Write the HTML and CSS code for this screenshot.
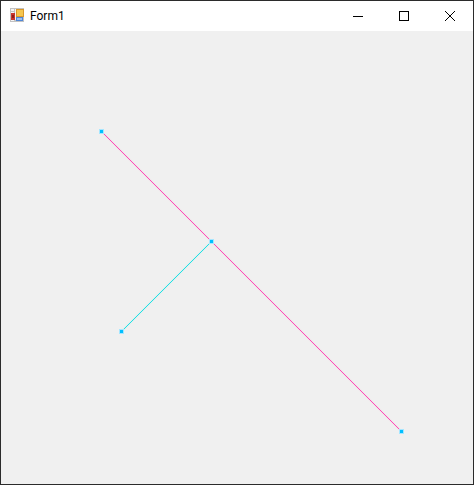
FILE: index.html
```html
<!DOCTYPE html>
<html lang="en">
<head>
<meta charset="utf-8">
<title>Form1</title>
<link rel="stylesheet" href="styles.css">
</head>
<body>
<div class="window">
  <header class="titlebar">
    <svg class="app-icon" width="14" height="14" viewBox="0 0 14 14" shape-rendering="crispEdges">
      <rect x="0" y="0" width="14" height="14" fill="#c2c2c2"/>
      <rect x="1" y="1" width="12" height="12" fill="#f4f4f4"/>
      <path d="M0 3.5h5M0 11.5h5M4.5 0v14M5 12.5h9" stroke="#c2c2c2" fill="none"/>
      <rect x="6" y="1" width="8" height="8" fill="#d9982a"/>
      <rect x="7" y="2" width="6" height="6" fill="#f6c64e"/>
      <rect x="1" y="5" width="4" height="7" fill="#c8362e"/>
      <rect x="2" y="7" width="2" height="3" fill="#8e1f1a"/>
      <rect x="6" y="9" width="7" height="4" fill="#4f86d6"/>
      <rect x="7" y="10" width="5" height="2" fill="#9cc0ee"/>
    </svg>
    <span class="title">Form1</span>
    <div class="controls">
      <button class="ctl" aria-label="Minimize">
        <svg width="10" height="10" viewBox="0 0 10 10"><path d="M0 5.5h10" stroke="#000" fill="none"/></svg>
      </button>
      <button class="ctl" aria-label="Maximize">
        <svg width="10" height="10" viewBox="0 0 10 10"><rect x="0.5" y="0.5" width="9" height="9" stroke="#000" fill="none"/></svg>
      </button>
      <button class="ctl" aria-label="Close">
        <svg width="10" height="10" viewBox="0 0 10 10"><path d="M0 0L10 10M10 0L0 10" stroke="#000" stroke-width="1" fill="none"/></svg>
      </button>
    </div>
  </header>
  <main class="client">
    <svg class="canvas" width="472" height="453" viewBox="1 31 472 453">
      <g fill="none" class="halo">
        <path d="M101.5 131.5L401.5 431.5" stroke="#ff69b4"/>
        <path d="M211.5 241.5L121.5 331.5" stroke="#40e0e0"/>
      </g>
      <g fill="none" stroke-width="1">
        <path d="M101.5 131.5L401.5 431.5" stroke="#ff4db8"/>
        <path d="M211.5 241.5L121.5 331.5" stroke="#20e0e4"/>
      </g>
      <g shape-rendering="crispEdges">
        <g fill="#a6e6ff">
          <rect x="99" y="129" width="5" height="5"/>
          <rect x="209" y="239" width="5" height="5"/>
          <rect x="119" y="329" width="5" height="5"/>
          <rect x="399" y="429" width="5" height="5"/>
        </g>
        <g fill="#00bfff">
          <rect x="100" y="130" width="3" height="3"/>
          <rect x="210" y="240" width="3" height="3"/>
          <rect x="120" y="330" width="3" height="3"/>
          <rect x="400" y="430" width="3" height="3"/>
        </g>
      </g>
    </svg>
  </main>
</div>
</body>
</html>
```

FILE: styles.css
```css
html, body {
  margin: 0;
  padding: 0;
  background: #f0f0f0;
}
.window {
  width: 474px;
  height: 485px;
  box-sizing: border-box;
  border: 1px solid #2b2b2b;
  display: flex;
  flex-direction: column;
  overflow: hidden;
}
.titlebar {
  height: 30px;
  flex: none;
  background: #fff;
  display: flex;
  align-items: center;
  padding-left: 9px;
}
.app-icon {
  flex: none;
  display: block;
  margin-bottom: 2px;
}
.title {
  margin-left: 6px;
  font: 12px/16px Roboto, "Noto Sans", sans-serif;
  color: #000;
}
.controls {
  margin-left: auto;
  display: flex;
  height: 100%;
}
.ctl {
  width: 46px;
  height: 30px;
  padding: 0;
  border: 0;
  background: transparent;
  display: flex;
  align-items: center;
  justify-content: center;
}
.ctl svg {
  display: block;
}
.client {
  flex: 1;
  background: #f0f0f0;
}
.canvas {
  display: block;
}
.halo {
  stroke-width: 2;
  stroke-opacity: 0.12;
}
```
